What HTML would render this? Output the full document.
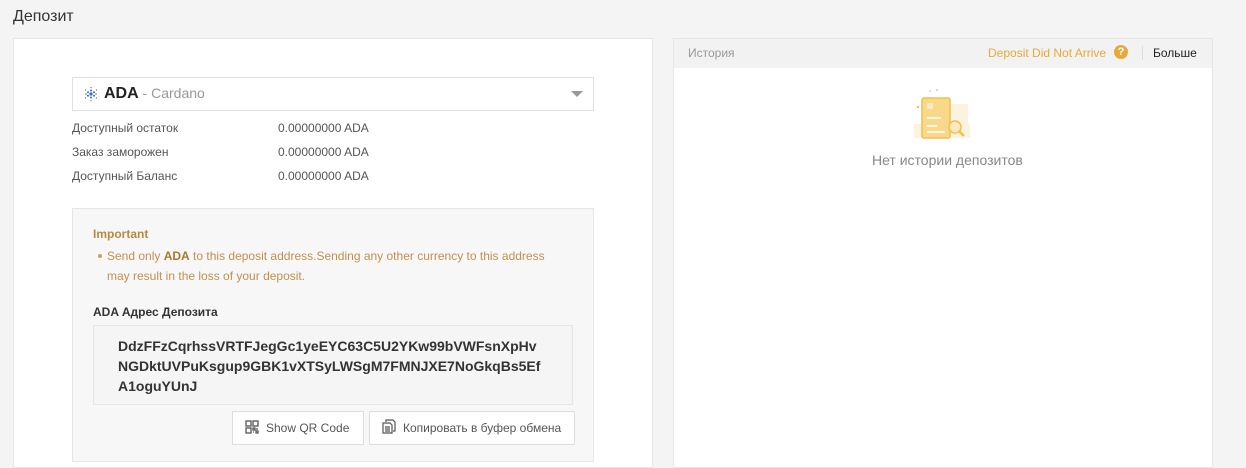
<!DOCTYPE html>
<html><head><meta charset="utf-8"><style>
*{box-sizing:border-box;margin:0;padding:0}
body{width:1246px;height:463px;overflow:hidden;background:#f4f4f4;font-family:"Liberation Sans",Arial,sans-serif;color:#333;position:relative}
.abs{position:absolute}
.t{font-size:12px;color:#555}
</style></head><body>
<div class="abs" style="left:13px;top:8px;font-size:16px;color:#333">Депозит</div>
<div class="abs" style="left:13px;top:38px;width:640px;height:430px;background:#fff;border:1px solid #e6e6e6"></div>
<div class="abs" style="left:72px;top:77px;width:522px;height:34px;border:1px solid #e0e0e0;background:#fff"></div>
<svg class="abs" style="left:83px;top:86px" width="16" height="16" viewBox="0 0 16 16"><g fill="#3468d1"><circle cx="8" cy="8" r="1.6"/><circle cx="5" cy="6.3" r="1"/><circle cx="11" cy="6.3" r="1"/><circle cx="5" cy="9.7" r="1"/><circle cx="11" cy="9.7" r="1"/><circle cx="8" cy="4.5" r="1"/><circle cx="8" cy="11.5" r="1"/><circle cx="3" cy="8" r=".7"/><circle cx="13" cy="8" r=".7"/><circle cx="8" cy="1.5" r=".6"/><circle cx="8" cy="14.5" r=".6"/><circle cx="2.5" cy="4" r=".6"/><circle cx="13.5" cy="4" r=".6"/><circle cx="2.5" cy="12" r=".6"/><circle cx="13.5" cy="12" r=".6"/></g></svg>
<div class="abs" style="left:104px;top:85px;font-size:16px"><b style="color:#222">ADA</b><span style="color:#999;font-size:14px"> - Cardano</span></div>
<div class="abs" style="left:571px;top:91px;width:0;height:0;border-left:6px solid transparent;border-right:6px solid transparent;border-top:6px solid #999"></div>
<div class="abs t" style="left:72px;top:121px">Доступный остаток</div><div class="abs t" style="left:278px;top:121px">0.00000000 ADA</div>
<div class="abs t" style="left:72px;top:145px">Заказ заморожен</div><div class="abs t" style="left:278px;top:145px">0.00000000 ADA</div>
<div class="abs t" style="left:72px;top:169px">Доступный Баланс</div><div class="abs t" style="left:278px;top:169px">0.00000000 ADA</div>
<div class="abs" style="left:72px;top:208px;width:522px;height:254px;background:#f7f7f7;border:1px solid #e6e6e6"></div>
<div class="abs" style="left:93px;top:227px;font-size:12px;font-weight:bold;color:#b78a3f">Important</div>
<div class="abs" style="left:98px;top:254px;width:4px;height:4px;border-radius:2px;background:#c8a060"></div>
<div class="abs" style="left:107px;top:246px;width:455px;font-size:12px;line-height:20px;color:#c09050">Send only <b style="color:#a87a30">ADA</b> to this deposit address.Sending any other currency to this address may result in the loss of your deposit.</div>
<div class="abs" style="left:93px;top:305px;font-size:12px;font-weight:bold;color:#333">ADA Адрес Депозита</div>
<div class="abs" style="left:93px;top:325px;width:480px;height:80px;border:1px solid #e6e6e6;background:#f5f5f5"></div>
<div class="abs" style="left:118px;top:336px;font-size:14px;font-weight:bold;line-height:20px;color:#333;width:450px">DdzFFzCqrhssVRTFJegGc1yeEYC63C5U2YKw99bVWFsnXpHv<br>NGDktUVPuKsgup9GBK1vXTSyLWSgM7FMNJXE7NoGkqBs5Ef<br>A1oguYUnJ</div>
<div class="abs" style="left:232px;top:411px;width:132px;height:34px;border:1px solid #ddd;background:#fff"></div>
<svg class="abs" style="left:245px;top:420px" width="14" height="14" viewBox="0 0 14 14" fill="none" stroke="#555" stroke-width="1.3"><rect x="1" y="1" width="5" height="5"/><rect x="8" y="1" width="5" height="5"/><rect x="1" y="8" width="5" height="5"/><path d="M8 8h2v2H8zM11 11h2v2h-2zM12 8v2M8 12h1"/></svg>
<div class="abs" style="left:266px;top:421px;font-size:12px;color:#555">Show QR Code</div>
<div class="abs" style="left:369px;top:411px;width:206px;height:34px;border:1px solid #ddd;background:#fff"></div>
<svg class="abs" style="left:382px;top:419px" width="14" height="15" viewBox="0 0 14 15" fill="none" stroke="#555" stroke-width="1.2"><path d="M4 3V1h7l2 2v9h-2"/><path d="M1 4h7l2 2v8H1z"/><path d="M3 8h5M3 10h5M3 12h5"/></svg>
<div class="abs" style="left:403px;top:421px;font-size:12px;color:#555">Копировать в буфер обмена</div>
<div class="abs" style="left:673px;top:38px;width:540px;height:430px;background:#fff;border:1px solid #e6e6e6"></div>
<div class="abs" style="left:674px;top:39px;width:538px;height:29px;background:#f2f2f2"></div>
<div class="abs" style="left:688px;top:46px;font-size:12px;color:#999">История</div>
<div class="abs" style="left:988px;top:46px;font-size:12px;color:#e8a93a">Deposit Did Not Arrive</div>
<div class="abs" style="left:1114px;top:45px;width:14px;height:14px;border-radius:7px;background:#e8a93a;color:#fff;font-size:11px;font-weight:bold;text-align:center;line-height:14px">?</div>
<div class="abs" style="left:1142px;top:46px;width:1px;height:14px;background:#ddd"></div>
<div class="abs" style="left:1153px;top:46px;font-size:12px;color:#222">Больше</div>
<svg class="abs" style="left:912px;top:88px" width="62" height="56" viewBox="0 0 62 56"><rect x="2" y="36" width="56" height="14" fill="#fcf3df"/><rect x="36" y="16" width="20" height="22" fill="#fcf3df"/><rect x="10" y="10" width="28" height="40" rx="2" fill="#f8d98a" stroke="#f0c050" stroke-width="1.5"/><rect x="15" y="15" width="6" height="6" fill="#fbe9bd"/><path d="M15 30h14M15 38h10M15 44h18" stroke="#fff" stroke-width="1.5"/><circle cx="43" cy="39" r="6" fill="#fbe9bd" stroke="#f0c050" stroke-width="1.5"/><path d="M47 43l5 5" stroke="#f0c050" stroke-width="2.5"/><circle cx="18" cy="3" r="1" fill="#cde"/><circle cx="25" cy="2" r="1" fill="#ccc"/><circle cx="6" cy="19" r="1.2" fill="#f0c050"/></svg>
<div class="abs" style="left:872px;top:152px;font-size:14px;color:#888">Нет истории депозитов</div>
</body></html>
